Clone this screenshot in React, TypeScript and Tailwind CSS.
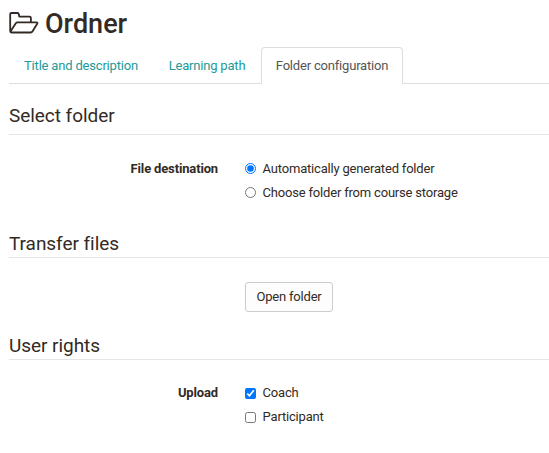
import React from "react";

function Tab({ label, active, cls }: { label: string; active?: boolean; cls: string }) {
  return (
    <div
      className={
        "-mb-px flex h-[37px] items-center justify-center rounded-t border " +
        cls +
        (active ? " border-[#ddd] border-b-white bg-white text-[#555]" : " border-transparent text-[#239a9a]")
      }
    >
      {label}
    </div>
  );
}

function Legend({ children, cls = "" }: { children: string; cls?: string }) {
  return (
    <h2 className={"border-b border-[#e5e5e5] text-[19px] leading-[26px] tracking-[-0.05px] text-[#332a25] " + cls}>
      {children}
    </h2>
  );
}

function Option({ type, label, checked }: { type: "radio" | "checkbox"; label: string; checked?: boolean }) {
  return (
    <label className="flex h-6 items-center gap-[6.6px]">
      <input
        type={type}
        name={type}
        defaultChecked={checked}
        className={type === "radio" ? "m-0 mb-px size-[11px]" : "m-0 mt-px size-[11px]"}
      />
      {label}
    </label>
  );
}

export default function App() {
  return (
    <main className="h-[453px] w-[549px] overflow-hidden bg-white pl-[9px] font-['Roboto',sans-serif] text-[13px] tracking-[-0.19px] text-[#332a25]">
      <h1 className="flex h-[47px] items-center gap-[6px] text-[27px] font-medium tracking-normal">
        <svg width="30" height="23" viewBox="0 0 30 23" fill="none" stroke="currentColor" strokeWidth="1.8" strokeLinejoin="round">
          <path d="M1.200 19V2.200Q1.200 1 2.400 1H8.500Q9.600 1 9.800 2.300L10.300 4.600H20.600Q21.900 4.600 21.900 5.900V10.300M1.500 19.500L6.800 11.300Q7.400 10.300 8.600 10.300H27.500Q29 10.300 28.200 11.700L23.600 19.300Q22.900 20.500 21.500 20.500H2.700Q1.200 20.500 1.200 19" />
        </svg>
        <span className="pt-px">Ordner</span>
      </h1>
      <nav className="flex h-[37px] border-b border-[#ddd]">
        <Tab label="Title and description" cls="w-[144px]" />
        <Tab label="Learning path" cls="w-[108px]" />
        <Tab label="Folder configuration" cls="w-[142px]" active />
      </nav>
      <section className="pt-[19px]">
        <Legend cls="pb-[5px]">Select folder</Legend>
        <div className="flex pt-[22px]">
          <b className="w-[209px] text-right leading-6 tracking-[-0.15px]">File destination</b>
          <div className="pl-[27px]">
            <Option type="radio" label="Automatically generated folder" checked />
            <Option type="radio" label="Choose folder from course storage" />
          </div>
        </div>
      </section>
      <section className="pt-[26px]">
        <Legend>Transfer files</Legend>
        <button className="mt-6 ml-[236px] block h-[30px] w-[88px] rounded-[3px] border border-[#ccc] bg-[#fdfdfd]">
          Open folder
        </button>
      </section>
      <section className="pt-[21px]">
        <Legend>User rights</Legend>
        <div className="flex pt-[21px]">
          <b className="w-[209px] text-right leading-6 tracking-[-0.15px]">Upload</b>
          <div className="pl-[27px]">
            <Option type="checkbox" label="Coach" checked />
            <Option type="checkbox" label="Participant" />
          </div>
        </div>
      </section>
    </main>
  );
}
